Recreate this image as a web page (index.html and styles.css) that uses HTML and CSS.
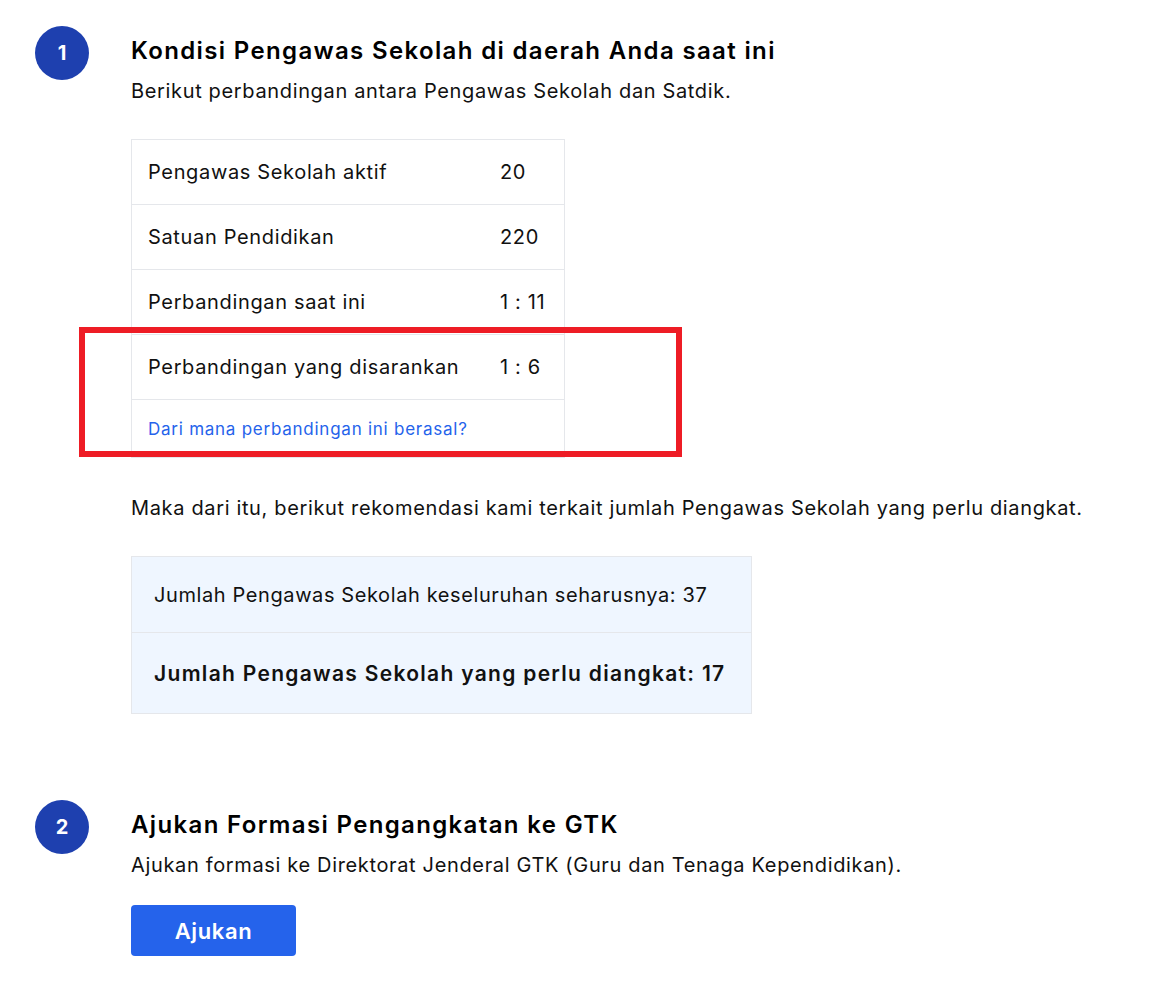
FILE: index.html
```html
<!DOCTYPE html>
<html lang="id">
<head>
<meta charset="utf-8">
<title>Formasi Pengawas Sekolah</title>
<link rel="stylesheet" href="styles.css">
</head>
<body>
<main class="page">
  <section class="step">
    <div class="step-num">1</div>
    <div class="step-body">
      <h2 class="step-title">Kondisi Pengawas Sekolah di daerah Anda saat ini</h2>
      <p class="step-desc">Berikut perbandingan antara Pengawas Sekolah dan Satdik.</p>
      <div class="ratio-wrap">
        <div class="ratio-table">
          <div class="ratio-row"><span class="ratio-label">Pengawas Sekolah aktif</span><span class="ratio-value">20</span></div>
          <div class="ratio-row"><span class="ratio-label">Satuan Pendidikan</span><span class="ratio-value">220</span></div>
          <div class="ratio-row"><span class="ratio-label">Perbandingan saat ini</span><span class="ratio-value">1 : 11</span></div>
          <div class="ratio-row"><span class="ratio-label">Perbandingan yang disarankan</span><span class="ratio-value">1 : 6</span></div>
          <div class="ratio-link-row"><a class="ratio-link" href="#">Dari mana perbandingan ini berasal?</a></div>
        </div>
        <div class="highlight-box"></div>
      </div>
      <p class="step-desc recommend">Maka dari itu, berikut rekomendasi kami terkait jumlah Pengawas Sekolah yang perlu diangkat.</p>
      <div class="result-box">
        <div class="result-row">Jumlah Pengawas Sekolah keseluruhan seharusnya: 37</div>
        <div class="result-row result-strong">Jumlah Pengawas Sekolah yang perlu diangkat: 17</div>
      </div>
    </div>
  </section>
  <section class="step step-second">
    <div class="step-num">2</div>
    <div class="step-body">
      <h2 class="step-title">Ajukan Formasi Pengangkatan ke GTK</h2>
      <p class="step-desc">Ajukan formasi ke Direktorat Jenderal GTK (Guru dan Tenaga Kependidikan).</p>
      <button class="btn-primary" type="button">Ajukan</button>
    </div>
  </section>
</main>
</body>
</html>
```
FILE: styles.css
```css
* { box-sizing: border-box; }
body {
  margin: 0;
  background: #ffffff;
  color: #111111;
  font-family: Inter, "Noto Sans", sans-serif;
}
.page {
  padding: 26px 0 0 35px;
}
.step {
  display: flex;
  gap: 42px;
}
.step-second {
  margin-top: 86px;
}
.step-num {
  flex: 0 0 54px;
  width: 54px;
  height: 54px;
  border-radius: 50%;
  background: #1e40af;
  color: #fff;
  font-weight: 700;
  font-size: 20px;
  display: flex;
  align-items: center;
  justify-content: center;
}
.step-body {
  flex: 1;
  padding-top: 9px;
}
.step-title {
  margin: 0;
  font-size: 24px;
  line-height: 32px;
  font-weight: 600;
  letter-spacing: 1.35px;
  color: #000;
}
.step-desc {
  margin: 10px 0 0;
  font-size: 20px;
  line-height: 28px;
  letter-spacing: 0.65px;
  color: #111;
}
.ratio-wrap {
  position: relative;
  margin-top: 34px;
  width: 434px;
}
.ratio-table {
  border: 1px solid #e5e7eb;
  border-bottom: 0;
}
.ratio-row {
  display: flex;
  height: 65px;
  align-items: center;
  padding: 0 16px;
  border-bottom: 1px solid #e5e7eb;
  font-size: 20px;
  letter-spacing: 0.65px;
}
.ratio-label { flex: 1; }
.ratio-value { width: 48px; white-space: nowrap; }
.ratio-link-row {
  height: 58px;
  display: flex;
  align-items: center;
  padding: 0 16px;
  border-bottom: 1px solid #e5e7eb;
}
.ratio-link {
  color: #2563eb;
  font-size: 17px;
  letter-spacing: 0.75px;
  text-decoration: none;
}
.highlight-box {
  position: absolute;
  left: -52px;
  top: 188px;
  width: 603px;
  height: 130px;
  border: 6px solid #ee1c25;
}
.recommend {
  margin-top: 36px;
}
.result-box {
  margin-top: 34px;
  width: 621px;
  background: #eff6ff;
  border: 1px solid #e5e7eb;
}
.result-row {
  padding: 0 22px;
  height: 75px;
  display: flex;
  align-items: center;
  font-size: 20px;
  letter-spacing: 0.6px;
  white-space: nowrap;
}
.result-strong {
  height: 81px;
  border-top: 1px solid #e5e7eb;
  font-size: 21px;
  font-weight: 600;
  letter-spacing: 1.3px;
}
.btn-primary {
  margin-top: 26px;
  width: 165px;
  height: 51px;
  border: 0;
  border-radius: 4px;
  background: #2563eb;
  color: #fff;
  font-family: inherit;
  font-size: 22px;
  font-weight: 600;
  letter-spacing: 0.6px;
}
```
